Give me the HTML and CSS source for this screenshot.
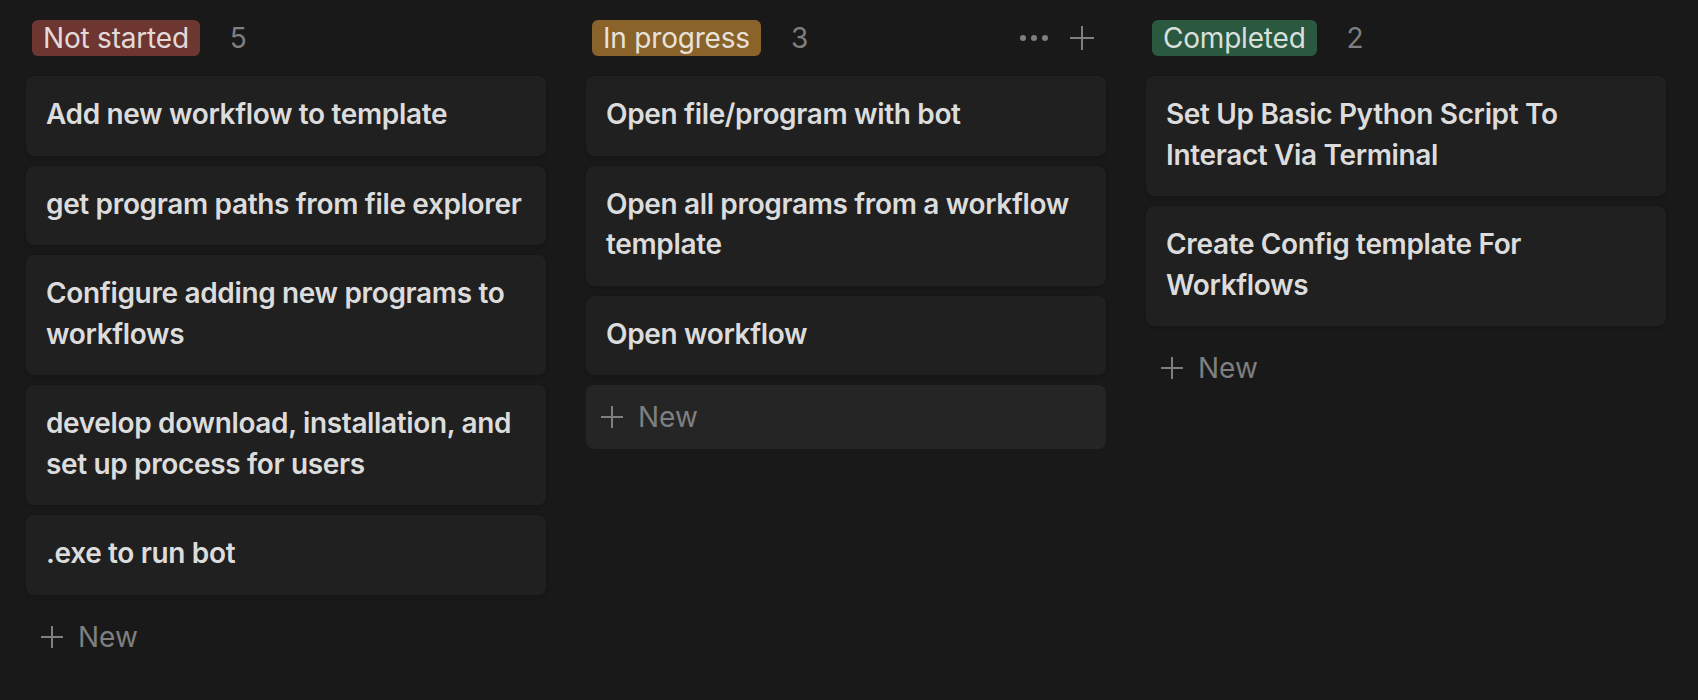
FILE: index.html
```html
<!DOCTYPE html>
<html lang="en">
<head>
<meta charset="utf-8">
<title>Board</title>
<link rel="stylesheet" href="styles.css">
</head>
<body>
<div class="board">
  <section class="column">
    <header class="col-header">
      <span class="tag tag-red">Not started</span>
      <span class="count">5</span>
    </header>
    <div class="cards">
      <div class="card">Add new workflow to template</div>
      <div class="card">get program paths from file explorer</div>
      <div class="card">Configure adding new programs to workflows</div>
      <div class="card">develop download, installation, and set up process for users</div>
      <div class="card">.exe to run bot</div>
      <div class="new-row">
        <svg class="plus" viewBox="0 0 24 24" width="24" height="24"><path d="M12 1v22M1 12h22" stroke="currentColor" stroke-width="2" fill="none"/></svg>
        <span>New</span>
      </div>
    </div>
  </section>

  <section class="column">
    <header class="col-header">
      <span class="tag tag-brown">In progress</span>
      <span class="count">3</span>
      <div class="actions">
        <svg class="dots" viewBox="0 0 28 6" width="28" height="6"><circle cx="3" cy="3" r="3" fill="currentColor"/><circle cx="14" cy="3" r="3" fill="currentColor"/><circle cx="25" cy="3" r="3" fill="currentColor"/></svg>
        <svg class="plus head-plus" viewBox="0 0 24 24" width="24" height="24"><path d="M12 0v24M0 12h24" stroke="currentColor" stroke-width="2" fill="none"/></svg>
      </div>
    </header>
    <div class="cards">
      <div class="card">Open file/program with bot</div>
      <div class="card">Open all programs from a workflow template</div>
      <div class="card">Open workflow</div>
      <div class="new-row hover">
        <svg class="plus" viewBox="0 0 24 24" width="24" height="24"><path d="M12 1v22M1 12h22" stroke="currentColor" stroke-width="2" fill="none"/></svg>
        <span>New</span>
      </div>
    </div>
  </section>

  <section class="column">
    <header class="col-header">
      <span class="tag tag-green">Completed</span>
      <span class="count">2</span>
    </header>
    <div class="cards">
      <div class="card">Set Up Basic Python Script To Interact Via Terminal</div>
      <div class="card">Create Config template For Workflows</div>
      <div class="new-row">
        <svg class="plus" viewBox="0 0 24 24" width="24" height="24"><path d="M12 1v22M1 12h22" stroke="currentColor" stroke-width="2" fill="none"/></svg>
        <span>New</span>
      </div>
    </div>
  </section>
</div>
</body>
</html>
```

FILE: styles.css
```css
html, body {
  margin: 0;
  padding: 0;
  background: #191919;
  height: 100%;
  overflow: hidden;
}

body {
  font-family: Inter, "Noto Sans", "Liberation Sans", sans-serif;
  color: #d9d9d9;
}

.board {
  display: flex;
  gap: 40px;
  padding: 16px 0 0 26px;
}

.column {
  width: 520px;
  flex: 0 0 520px;
}

.col-header {
  height: 44px;
  display: flex;
  align-items: center;
  padding: 0 12px 0 6px;
  margin-bottom: 16px;
}

.tag {
  height: 36px;
  line-height: 36px;
  padding: 0 11px;
  border-radius: 6px;
  font-size: 28px;
  font-weight: 400;
  letter-spacing: -0.2px;
  color: rgba(255, 255, 255, 0.84);
  white-space: nowrap;
}

.tag-red { background: #6e3630; }
.tag-brown { background: #89632a; }
.tag-green { background: #2b593f; }

.count {
  margin-left: 30px;
  font-size: 28px;
  color: #7f7f7f;
  line-height: 36px;
}

.actions {
  margin-left: auto;
  display: flex;
  align-items: center;
  gap: 22px;
  color: #7f7f7f;
}

.dots { display: block; }
.head-plus { display: block; }

.cards {
  display: flex;
  flex-direction: column;
  gap: 10px;
}

.card {
  background: #202020;
  border-radius: 8px;
  padding: 18px 12px 21px 20px;
  font-size: 28px;
  line-height: 40.5px;
  font-weight: 600;
  letter-spacing: -0.35px;
  color: #dcdcdc;
  box-shadow: 0 0 0 1px rgba(15, 15, 15, 0.1), 0 2px 4px rgba(15, 15, 15, 0.2);
}

.new-row {
  height: 64px;
  display: flex;
  align-items: center;
  gap: 14px;
  padding-left: 14px;
  border-radius: 8px;
  color: #7f7f7f;
  font-size: 28px;
}

.new-row.hover {
  background: #252525;
}

.plus { display: block; flex: 0 0 auto; }
```
